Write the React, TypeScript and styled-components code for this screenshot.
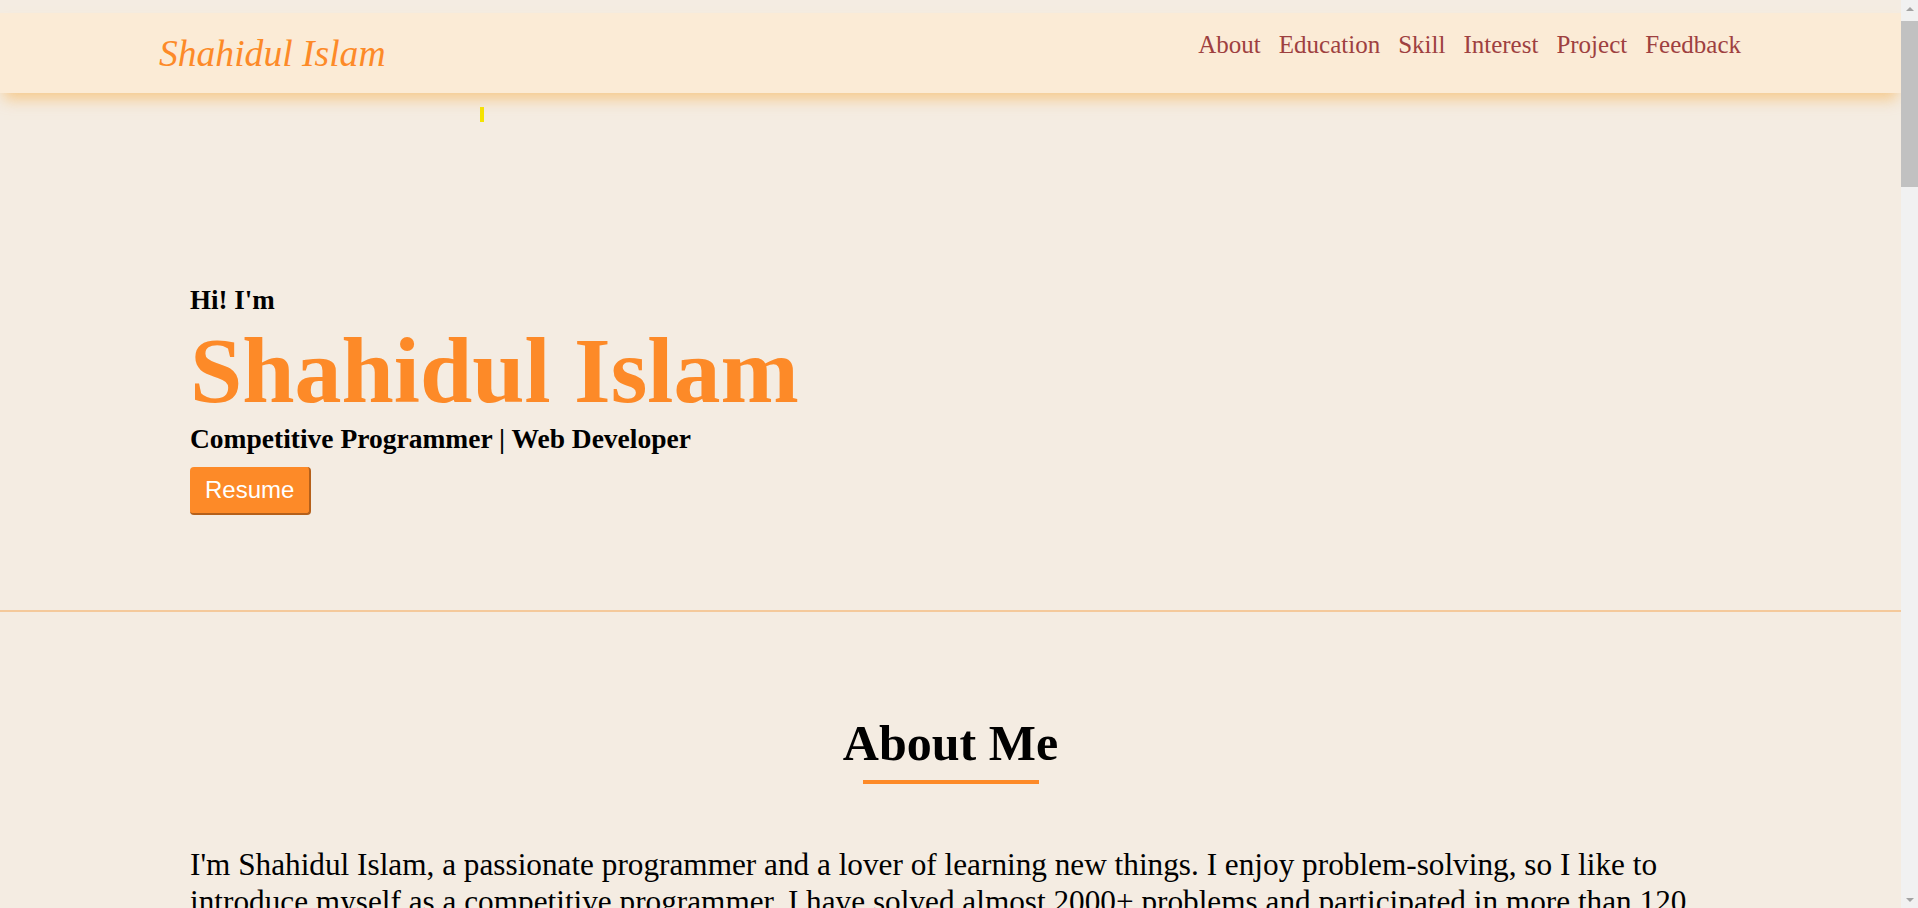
import * as React from 'react';
import styled, {createGlobalStyle} from 'styled-components';

const orange = '#fd8a28';

const GlobalStyle = createGlobalStyle`
    html::-webkit-scrollbar {
        display: none;
    }
    body {
        margin: 0;
        background: #f4ece2;
        font-family: 'Liberation Serif', 'Times New Roman', serif;
        color: #000;
    }
`

const Page = styled.div`
    padding-top: 13px;
    margin-right: 17px;
`

const NavBar = styled.header`
    height: 80px;
    background: #fbebd6;
    box-shadow: 0 10px 14px -4px rgba(245, 190, 110, 0.75);
    display: flex;
    align-items: center;
    justify-content: space-between;
    padding: 0 160px 0 159px;
    position: relative;
    z-index: 2;
`

const Logo = styled.a`
    font-size: 37.6px;
    font-style: italic;
    color: ${orange};
    text-decoration: none;
    cursor: pointer;
`

const Menu = styled.ul`
    list-style: none;
    display: flex;
    gap: 18px;
    margin: 0 0 17px;
    padding: 0;
`

const MenuItem = styled.li`
    font-size: 25px;
    color: #9e4040;
    cursor: pointer;
`

const Hero = styled.section`
    position: relative;
    padding: 191px 190px 95px;
    border-bottom: 2px solid #f4c99b;
`

const Cursor = styled.span`
    position: absolute;
    top: 14px;
    left: 480px;
    width: 4px;
    height: 15px;
    background: #f5e400;
`

const Greeting = styled.h3`
    margin: 0 0 4px;
    font-size: 27px;
    line-height: 32px;
    font-weight: 700;
`

const Name = styled.h1`
    margin: 0 0 3px;
    font-size: 94px;
    line-height: 100px;
    font-weight: 700;
    color: ${orange};
`

const Tagline = styled.h3`
    margin: 0 0 12px;
    font-size: 27.5px;
    line-height: 32px;
    font-weight: 700;
`

const ResumeButton = styled.button`
    font-family: 'Liberation Sans', Arial, sans-serif;
    font-size: 24px;
    line-height: 28px;
    color: #fff;
    background: ${orange};
    border: none;
    border-right: 2px solid #b5601a;
    border-bottom: 2px solid #b5601a;
    border-radius: 4px;
    padding: 9px 15px;
    cursor: pointer;
`

const Section = styled.section`
    padding: 101px 190px 80px;
`

const SectionTitle = styled.h2`
    margin: 0;
    text-align: center;
    font-size: 50px;
    line-height: 60px;
    font-weight: 700;
`

const Underline = styled.div`
    width: 176px;
    height: 4px;
    background: ${orange};
    margin: 7px auto 62px;
`

const Paragraph = styled.p`
    margin: 0;
    font-size: 31.25px;
    line-height: 37px;
`

// browser scrollbar as it shows in the screenshot
const ScrollBar = styled.div`
    position: fixed;
    top: 0;
    right: 0;
    width: 17px;
    height: 100vh;
    background: #f1f1f1;
    display: flex;
    flex-direction: column;
    z-index: 10;
`

const Arrow = styled.div<{$down?: boolean}>`
    height: 17px;
    display: flex;
    align-items: center;
    justify-content: center;
    &::before {
        content: '';
        border-left: 4px solid transparent;
        border-right: 4px solid transparent;
        ${(p) => p.$down ? 'border-top: 4px solid #a3a3a3;' : 'border-bottom: 4px solid #a3a3a3;'}
    }
`

const Track = styled.div`
    flex: 1;
    padding-top: 4px;
`

const Thumb = styled.div`
    height: 166px;
    background: #c1c1c1;
`

const links = ['About', 'Education', 'Skill', 'Interest', 'Project', 'Feedback'];

export default function App() {
    return (
        <Page>
            <GlobalStyle/>
            <NavBar>
                <Logo>Shahidul Islam</Logo>
                <Menu>
                    {links.map((l) => <MenuItem key={l}>{l}</MenuItem>)}
                </Menu>
            </NavBar>
            <Hero>
                <Cursor/>
                <Greeting>Hi! I'm</Greeting>
                <Name>Shahidul Islam</Name>
                <Tagline>Competitive Programmer | Web Developer</Tagline>
                <ResumeButton>Resume</ResumeButton>
            </Hero>
            <Section>
                <SectionTitle>About Me</SectionTitle>
                <Underline/>
                <Paragraph>
                    I'm Shahidul Islam, a passionate programmer and a lover of learning new things. I enjoy
                    problem-solving, so I like to introduce myself as a competitive programmer. I have solved
                    almost 2000+ problems and participated in more than 120 programming contests on various
                    online judges. I also love to build things for the web, and I am always eager to learn
                    new technologies.
                </Paragraph>
            </Section>
            {links.slice(1).map((l) => (
                <Section key={l}>
                    <SectionTitle>{l}</SectionTitle>
                    <Underline/>
                </Section>
            ))}
            <ScrollBar>
                <Arrow/>
                <Track>
                    <Thumb/>
                </Track>
                <Arrow $down/>
            </ScrollBar>
        </Page>
    );
}
